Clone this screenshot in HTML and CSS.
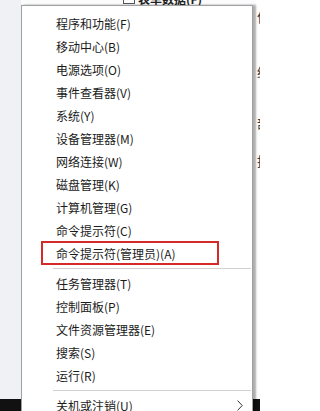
FILE: index.html
```html
<!DOCTYPE html>
<html lang="zh-CN">
<head>
<meta charset="utf-8">
<title>Win+X 菜单</title>
<link rel="stylesheet" href="styles.css">
</head>
<body>
<div class="screen">
  <div class="behind">
    <div class="pane">
      <div class="toolbar"><span class="check"></span><span class="tb-label">表单数据(F)</span></div>
    </div>
    <div class="side">
      <span class="frag f1">信</span>
      <span class="frag f2">结</span>
      <span class="frag f3">部</span>
      <span class="frag f4">据</span>
    </div>
  </div>
  <div class="taskbar"></div>

  <div class="menu">
    <div class="item">程序和功能(F)</div>
    <div class="item">移动中心(B)</div>
    <div class="item">电源选项(O)</div>
    <div class="item">事件查看器(V)</div>
    <div class="item">系统(Y)</div>
    <div class="item">设备管理器(M)</div>
    <div class="item">网络连接(W)</div>
    <div class="item">磁盘管理(K)</div>
    <div class="item">计算机管理(G)</div>
    <div class="item">命令提示符(C)</div>
    <div class="item">命令提示符(管理员)(A)<span class="mark"></span></div>
    <div class="sep"></div>
    <div class="item">任务管理器(T)</div>
    <div class="item">控制面板(P)</div>
    <div class="item">文件资源管理器(E)</div>
    <div class="item">搜索(S)</div>
    <div class="item">运行(R)</div>
    <div class="sep"></div>
    <div class="item">关机或注销(U)
      <svg class="chev" width="6" height="11" viewBox="0 0 6 11"><path d="M0.6 0.6 L5.2 5.5 L0.6 10.4" fill="none" stroke="#333" stroke-width="1"/></svg>
    </div>
  </div>
</div>
</body>
</html>
```
FILE: styles.css
```css
html, body {
  margin: 0;
  padding: 0;
}
body {
  font-family: "Noto Sans CJK SC", "Noto Sans", sans-serif;
}
.screen {
  position: relative;
  width: 260px;
  height: 411px;
  overflow: hidden;
  display: grid;
  grid-template-rows: 1fr 12px;
  background: #eff1f4;
}
.behind {
  display: grid;
  grid-template-columns: 256px 1fr;
  min-height: 0;
}
.pane {
  background: #eff1f4;
}
.toolbar {
  margin-top: -9px;
  margin-left: 21px;
  height: 13px;
  display: flex;
  align-items: flex-end;
  gap: 3px;
  padding-left: 102px;
  background: #fbfbfb;
}
.check {
  width: 10px;
  height: 10px;
  border: 1px solid #555;
  background: #fff;
}
.tb-label {
  font-size: 12px;
  line-height: 14px;
  font-weight: 700;
  color: #222;
  margin-bottom: -2px;
}
.side {
  background: #fff;
  display: flex;
  flex-direction: column;
  align-items: flex-start;
  padding-top: 10px;
  overflow: hidden;
}
.frag {
  font-size: 13px;
  line-height: 14px;
  color: #333;
  margin-left: 1px;
}
.f2 { margin-top: 41px; }
.f3 { margin-top: 37px; }
.f4 { margin-top: 24px; }
.taskbar {
  background: #111;
}
.menu {
  position: absolute;
  left: 21px;
  top: 5px;
  width: 232px;
  bottom: -20px;
  box-sizing: border-box;
  background: #fff;
  border: 1px solid #a0a0a0;
  box-shadow: 3px 0 2px rgba(0, 0, 0, 0.28);
  padding-top: 6px;
}
.item {
  position: relative;
  height: 23px;
  display: flex;
  align-items: center;
  padding-left: 34px;
  padding-right: 9px;
  font-size: 12px;
  color: #1b1b1b;
  white-space: nowrap;
}
.sep {
  height: 1px;
  background: #d2d2d2;
  margin: 3px 1px 3px 31px;
}
.mark {
  position: absolute;
  left: 19px;
  top: -1px;
  width: 178px;
  height: 24px;
  box-sizing: border-box;
  border: 2px solid #d52a2a;
}
.chev {
  margin-left: auto;
}
```
